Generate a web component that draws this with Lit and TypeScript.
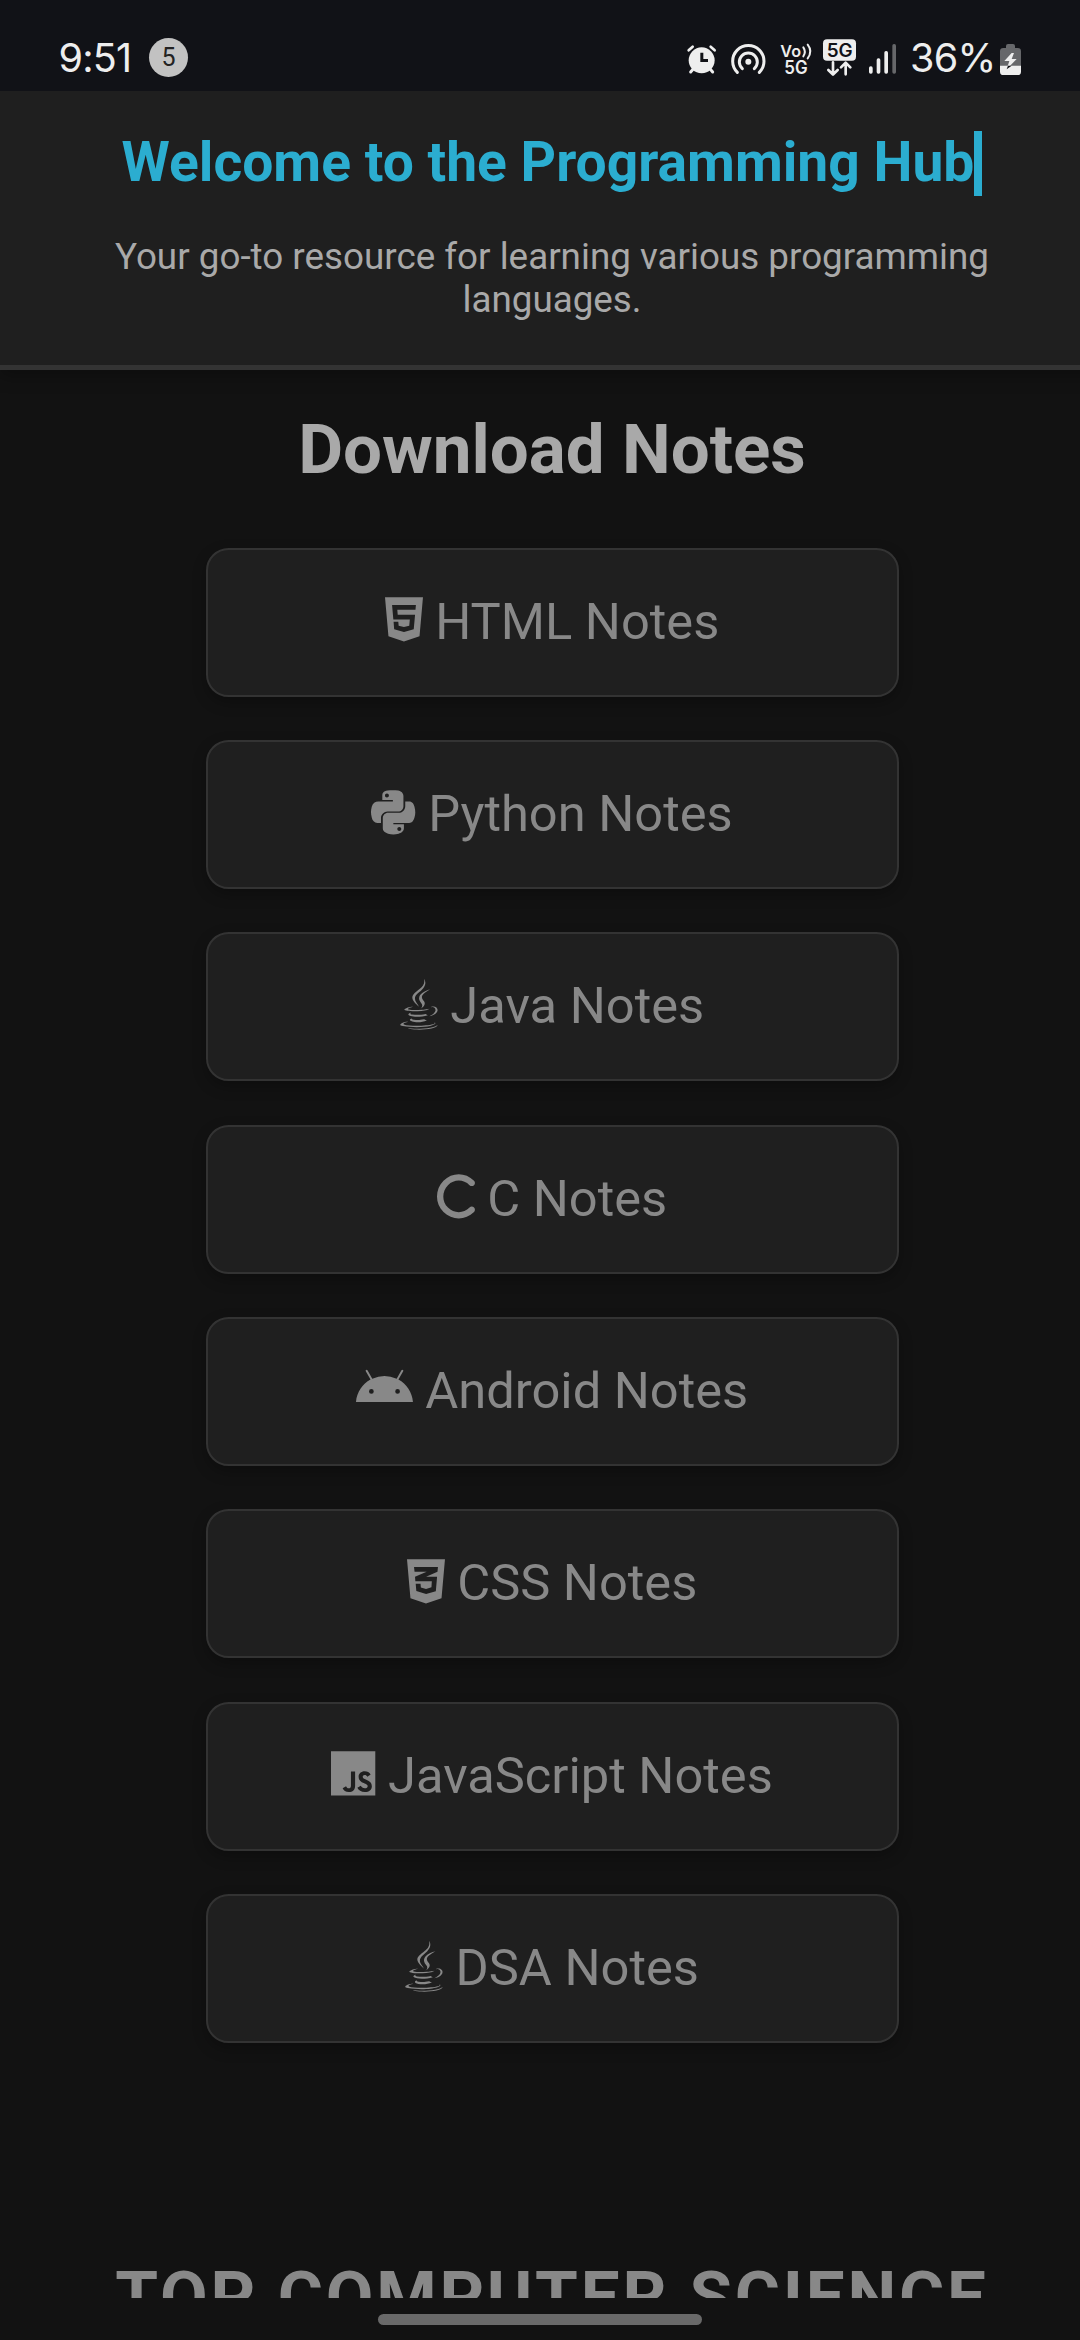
import { LitElement, html, svg, css } from "lit";
import { customElement, property } from "lit/decorators.js";

type Icon = { width: number; path: string };

const JAVA: Icon = {
  width: 384,
  path: "M277.74 312.9c9.8-6.7 23.4-12.5 23.4-12.5s-38.7 7-77.2 10.2c-47.1 3.9-97.7 4.7-123.1 1.3-60.1-8 33-30.1 33-30.1s-36.1-2.4-80.6 19c-52.5 25.4 130 37 224.5 12.1zm-85.4-32.1c-19-42.7-83.1-80.2 0-145.8C296 53.2 242.84 0 242.84 0c21.5 84.5-75.6 110.1-110.7 162.6-23.9 35.9 11.7 74.4 60.2 118.2zm114.6-176.2c.1 0-175.2 43.8-91.5 140.2 24.7 28.4-6.5 54-6.5 54s62.7-32.4 33.9-72.9c-26.9-37.8-47.5-56.6 64.1-121.3zm-6.1 270.5a12.19 12.19 0 0 1-2 2.6c128.3-33.7 81.1-118.9 19.8-97.3a17.33 17.33 0 0 0-8.2 6.3 70.45 70.45 0 0 1 11-3c31-6.5 75.5 41.5-20.6 91.4zM348 437.4s14.5 11.9-15.9 21.2c-57.9 17.5-240.8 22.8-291.6.7-18.3-7.9 16-19 26.8-21.3 11.2-2.4 17.7-2 17.7-2-20.3-14.3-131.3 28.1-56.4 40.2C232.84 509.4 401 461.3 348 437.4zM124.44 396c-78.7 22 47.9 67.4 148.1 24.5a185.89 185.89 0 0 1-28.2-13.8c-44.7 8.5-65.4 9.1-106 4.5-33.5-3.8-13.9-15.2-13.9-15.2zm179.8 97.2c-78.7 14.8-175.8 13.1-233.3 3.6 0-.1 11.8 9.7 72.4 13.6 92.2 5.9 233.8-3.3 237.1-46.9 0 0-6.4 16.5-76.2 29.7zM260.64 353c-59.2 11.4-93.5 11.1-136.8 6.6-33.5-3.5-11.6-19.7-11.6-19.7-86.8 28.8 48.2 61.4 169.5 25.9a60.37 60.37 0 0 1-21.1-12.8z",
};

const NOTES: { label: string; icon: Icon }[] = [
  {
    label: "HTML Notes",
    icon: {
      width: 384,
      path: "M0 32l34.9 395.8L191.5 480l157.6-52.2L384 32H0zm308.2 127.9H124.4l4.1 49.4h175.6l-13.6 148.4-97.9 27v.3h-1.1l-98.7-27.3-6-75.8h47.7L138 320l53.5 14.5 53.7-14.5 6-62.2H84.3L71.5 112.2h241.1l-4.4 47.7z",
    },
  },
  {
    label: "Python Notes",
    icon: {
      width: 448,
      path: "M439.8 200.5c-7.7-30.9-22.3-54.2-53.4-54.2h-40.1v47.4c0 36.8-31.2 67.8-66.8 67.8H172.7c-29.2 0-53.4 25-53.4 54.3v101.8c0 29 25.2 46 53.4 54.3 33.8 9.9 66.3 11.7 106.8 0 26.9-7.8 53.4-23.5 53.4-54.3v-40.7H226.2v-13.6h160.2c31.1 0 42.6-21.7 53.4-54.2 11.2-33.5 10.7-65.7 0-108.6zM286.2 404c11.1 0 20.1 9.1 20.1 20.3 0 11.3-9 20.4-20.1 20.4-11 0-20.1-9.2-20.1-20.4.1-11.3 9.1-20.3 20.1-20.3zM167.8 248.1h106.8c29.7 0 53.4-24.5 53.4-54.3V91.9c0-29-24.4-50.7-53.4-55.6-35.8-5.9-74.7-5.6-106.8.1-45.2 8-53.4 24.7-53.4 55.6v40.7h106.9v13.6h-147c-31.1 0-58.3 18.7-66.8 54.2-9.8 40.7-10.2 66.1 0 108.6 7.6 31.6 25.7 54.2 56.8 54.2H101v-48.8c0-35.3 30.5-66.4 66.8-66.4zm-6.7-142.6c-11.1 0-20.1-9.1-20.1-20.3.1-11.3 9-20.4 20.1-20.4 11 0 20.1 9.2 20.1 20.4s-9 20.3-20.1 20.3z",
    },
  },
  { label: "Java Notes", icon: JAVA },
  {
    label: "C Notes",
    icon: {
      width: 384,
      path: "M329.1 142.9c-62.5-62.5-155.8-62.5-218.3 0s-62.5 163.8 0 226.3s155.8 62.5 218.3 0c12.5-12.5 32.8-12.5 45.3 0s12.5 32.8 0 45.3c-87.5 87.5-221.3 87.5-308.8 0s-87.5-229.3 0-316.8s221.3-87.5 308.8 0c12.5 12.5 12.5 32.8 0 45.3s-32.8 12.5-45.3 0z",
    },
  },
  {
    label: "Android Notes",
    icon: {
      width: 576,
      path: "M420.55,301.93a24,24,0,1,1,24-24,24,24,0,0,1-24,24m-265.1,0a24,24,0,1,1,24-24,24,24,0,0,1-24,24m273.7-144.48,47.94-83a10,10,0,1,0-17.27-10h0l-48.54,84.07a301.25,301.25,0,0,0-246.56,0L116.18,64.45a10,10,0,1,0-17.27,10h0l47.94,83C64.53,202.22,8.24,285.55,0,384H576c-8.24-98.45-64.54-181.78-146.85-226.55",
    },
  },
  {
    label: "CSS Notes",
    icon: {
      width: 384,
      path: "M0 32l34.9 395.8L192 480l157.1-52.2L384 32H0zm313.1 80l-4.8 47.3L193 208.6l-.3.1h111.5l-12.8 146.6-98.2 28.7-98.8-29.2-6.4-73.9h48.9l3.2 38.3 52.6 13.3 54.7-15.4 3.7-61.6-166.3-.5v-.1l-.2.1-3.6-46.3L193.1 162l6.5-2.7H76.7L70.9 112h242.2z",
    },
  },
  {
    label: "JavaScript Notes",
    icon: {
      width: 448,
      path: "M0 32v448h448V32H0zm243.8 349.4c0 43.6-25.6 63.5-62.9 63.5-33.7 0-53.2-17.4-63.2-38.5l34.3-20.7c6.6 11.7 12.6 21.6 27.1 21.6 13.8 0 22.6-5.4 22.6-26.5V237.7h42.1v143.7zm99.6 63.5c-39.1 0-64.4-18.6-76.7-43l34.3-19.8c9 14.7 20.8 25.6 41.5 25.6 17.4 0 28.6-8.7 28.6-20.8 0-14.4-11.4-19.5-30.7-28l-10.5-4.5c-30.4-12.9-50.5-29.2-50.5-63.5 0-31.6 24.1-55.6 61.6-55.6 26.8 0 46 9.3 59.8 33.7L368 290c-7.2-12.9-15-18-27.1-18-12.3 0-20.1 7.8-20.1 18 0 12.6 7.8 17.7 25.9 25.6l10.5 4.5c35.8 15.3 55.9 31 55.9 66.2 0 37.8-29.8 58.6-69.7 58.6z",
    },
  },
  { label: "DSA Notes", icon: JAVA },
];

@customElement("note-button")
class NoteButton extends LitElement {
  @property() label = "";
  @property({ attribute: false }) icon: Icon = JAVA;

  static styles = css`
    :host {
      display: block;
    }
    .button {
      box-sizing: border-box;
      height: 149px;
      border: 2px solid #333;
      border-radius: 22.5px;
      background: #1f1f1f;
      box-shadow: 0 5.6px 14px rgba(0, 0, 0, 0.25);
      color: #888;
      font-size: 50.625px;
      line-height: 144px;
      text-align: center;
      white-space: nowrap;
    }
    .icon {
      height: 1em;
      width: auto;
      vertical-align: -0.125em;
      fill: currentColor;
      overflow: visible;
    }
  `;

  render() {
    return html`<div class="button"><svg class="icon" viewBox="0 0 ${this.icon.width} 512"><path d=${this.icon.path}></path></svg> ${this.label}</div>`;
  }
}

@customElement("status-bar")
class StatusBar extends LitElement {
  static styles = css`
    :host {
      display: block;
    }
    .bar {
      box-sizing: border-box;
      height: 91px;
      padding: 24px 59px 0 58.5px;
      display: flex;
      align-items: center;
      background: #111217;
      color: #eee;
      font-family: Inter, Roboto, sans-serif;
      font-size: 39.5px;
      line-height: 67px;
    }
    .time {
      width: 90.5px;
      padding-top: 1px;
      letter-spacing: -0.8px;
      white-space: nowrap;
    }
    .count {
      width: 39px;
      height: 39px;
      border-radius: 50%;
      background: #c2c2c2;
      color: #222;
      font-family: Roboto, sans-serif;
      font-size: 25px;
      line-height: 39px;
      text-align: center;
    }
    .icons {
      margin-left: auto;
      display: flex;
      align-items: center;
    }
    .glyph {
      display: block;
      flex: none;
      height: 40px;
      overflow: visible;
      fill: #eee;
    }
    .alarm { width: 29.33px; margin-right: 14.67px; }
    .hotspot { width: 34.67px; margin-right: 14.67px; }
    .volte { width: 32px; margin-right: 11px; }
    .data { width: 33px; margin-right: 13px; }
    .signal { width: 27px; margin-right: 14px; }
    .percent { width: 90px; padding-top: 1px; letter-spacing: -0.7px; white-space: nowrap; }
    .battery { width: 21px; }
    .line { fill: none; stroke: #eee; stroke-linecap: round; }
    .round { stroke-linejoin: round; }
    .dark { fill: #111217; }
    .dim { fill: #66676a; }
    .tiny { font: 600 54px Inter, Roboto, sans-serif; }
    .small { font-size: 49px; }
  `;

  render() {
    return html`<div class="bar">
      <div class="time">9:51</div>
      <div class="count">5</div>
      <div class="icons">
        <svg class="glyph alarm" viewBox="80 50 88 120">${svg`
          <circle cx="124" cy="117" r="39"></circle>
          <path class="line" stroke-width="8" d="M85 87L97 76M163 87L151 76"></path>
          <path class="line" stroke-width="9" d="M98 144L91 152M150 144L157 152"></path>
          <path d="M120 94h9v19h14v9h-23z" class="dark"></path>`}
        </svg>
        <svg class="glyph hotspot" viewBox="212 50 104 120">${svg`
          <circle cx="264" cy="121" r="9"></circle>
          <path class="line" stroke-width="9" d="M246 142a27 27 0 1 1 36 0"></path>
          <path class="line" stroke-width="9" d="M231 153a47 47 0 1 1 66 0"></path>`}
        </svg>
        <svg class="glyph volte" viewBox="360 50 96 120">${svg`
          <text class="tiny small" x="361" y="108" textLength="62" lengthAdjust="spacingAndGlyphs">Vo</text>
          <text class="tiny" x="373" y="159" textLength="70" lengthAdjust="spacingAndGlyphs">5G</text>
          <path class="line" stroke-width="6" d="M430 78q9 13 0 27M443 70q16 20 0 41"></path>`}
        </svg>
        <svg class="glyph data" viewBox="489 50 99 120">${svg`
          <rect x="489" y="54" width="99" height="64" rx="12"></rect>
          <text class="tiny dark" x="500" y="107" textLength="78" lengthAdjust="spacingAndGlyphs">5G</text>
          <path class="line round" stroke-width="8" d="M519 123v36M505 146l14 14 14-14M557 159v-34M543 138l14-14 14 14"></path>`}
        </svg>
        <svg class="glyph signal" viewBox="627 50 81 120">${svg`
          <rect x="627" y="135" width="11" height="22" rx="5"></rect>
          <rect x="650" y="111" width="11" height="46" rx="5"></rect>
          <rect x="673" y="89" width="11" height="68" rx="5"></rect>
          <rect class="dim" x="697" y="68" width="11" height="89" rx="5"></rect>`}
        </svg>
        <div class="percent">36%</div>
        <svg class="glyph battery" viewBox="1020 50 63 120">${svg`
          <path class="dim" d="M1038 80v-6q0-6 6-6h15q6 0 6 6v6h8q10 0 10 10v44h-63V90q0-10 10-10z"></path>
          <path d="M1020 133h63v18q0 10-10 10h-43q-10 0-10-10z"></path>
          <path d="M1055 95l-22 24h15l-8 25 30-31h-15l7-18z"></path>
          <path class="dark" d="M1044 133h11l-15 11z"></path>`}
        </svg>
      </div>
    </div>`;
  }
}

@customElement("app-root")
class AppRoot extends LitElement {
  static styles = css`
    :host {
      display: block;
      height: 2340px;
      overflow: hidden;
      background: #121212;
      font-family: Roboto, sans-serif;
    }
    .screen {
      display: flex;
      flex-direction: column;
      height: 2340px;
    }
    .viewport {
      height: 2207px;
      overflow: hidden;
    }
    .page {
      width: 1104px;
    }
    .header {
      box-sizing: border-box;
      height: 279px;
      padding: 39.5px 56px 0;
      background: #1f1f1f;
      border-bottom: 5px solid #333;
      box-shadow: 0 5.6px 17px rgba(0, 0, 0, 0.3);
      text-align: center;
    }
    .title {
      width: fit-content;
      margin: 0 auto;
      padding-bottom: 2px;
      border-right: 8px solid #2badd0;
      color: #2badd0;
      font-size: 55.2px;
      font-weight: 700;
      line-height: 63px;
      white-space: nowrap;
    }
    .subtitle {
      margin: 39.7px 0 0;
      color: #a9a9a9;
      font-size: 36.8px;
      line-height: 43px;
    }
    .heading {
      margin: 37.5px 0 0;
      color: #a9a9a9;
      font-size: 69.1px;
      font-weight: 700;
      line-height: 84px;
      text-align: center;
    }
    .notes {
      display: flex;
      flex-direction: column;
      gap: 43.35px;
      width: 693px;
      margin: 56px auto 0;
    }
    .courses {
      margin: 214px 0 0;
      color: #888;
      font-size: 69.1px;
      font-weight: 700;
      letter-spacing: 2.8px;
      line-height: 79px;
      text-align: center;
      white-space: nowrap;
    }
    .nav {
      flex: 1;
      display: flex;
      justify-content: center;
      padding-top: 16px;
    }
    .pill {
      width: 324px;
      height: 11px;
      border-radius: 5.5px;
      background: #696969;
    }
  `;

  render() {
    return html`<div class="screen">
      <status-bar></status-bar>
      <main class="viewport">
        <div class="page">
          <header class="header">
            <h1 class="title">Welcome to the Programming Hub</h1>
            <p class="subtitle">Your go-to resource for learning various programming languages.</p>
          </header>
          <h2 class="heading">Download Notes</h2>
          <div class="notes">
            ${NOTES.map((n) => html`<note-button .label=${n.label} .icon=${n.icon}></note-button>`)}
          </div>
          <h2 class="courses">TOP COMPUTER SCIENCE</h2>
        </div>
      </main>
      <div class="nav"><div class="pill"></div></div>
    </div>`;
  }
}
